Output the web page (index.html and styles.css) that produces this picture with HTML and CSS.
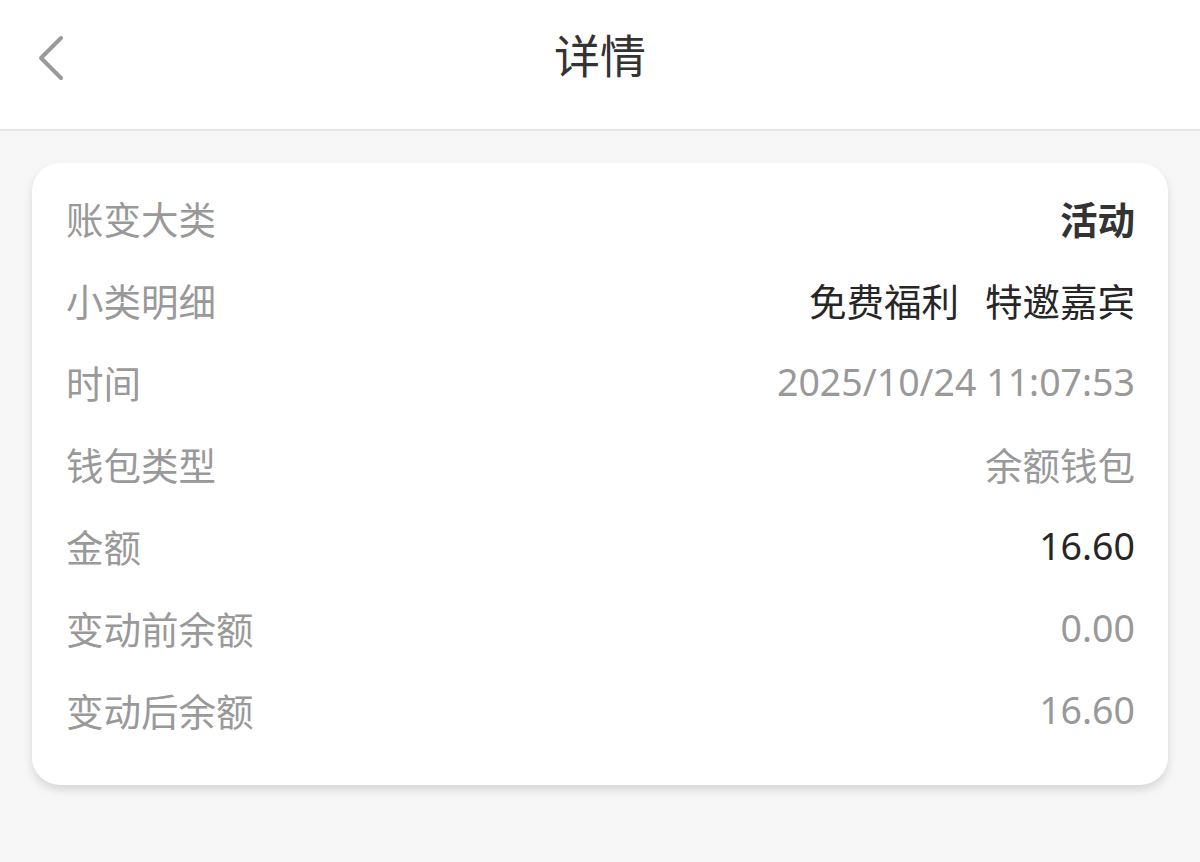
FILE: index.html
```html
<!DOCTYPE html>
<html lang="zh-CN">
<head>
    <meta charset="UTF-8">
    <meta name="viewport" content="width=device-width, initial-scale=1.0">
    <title>详情</title>
    <link rel="stylesheet" href="styles.css">
</head>
<body>

    <header class="top-bar">
        <a class="back-btn" href="#">
            <svg width="36" height="48" viewBox="0 0 36 48">
                <path d="M27 4 L7 24 L27 44" fill="none" stroke="#9a9a9a" stroke-width="4" stroke-linecap="round" stroke-linejoin="round"/>
            </svg>
        </a>
        <h1 class="title">详情</h1>
    </header>

    <main class="content">
        <div class="detail-card">
            <div class="row">
                <span class="label">账变大类</span>
                <span class="value strong">活动</span>
            </div>
            <div class="row">
                <span class="label">小类明细</span>
                <span class="value dark"><span>免费福利</span><span class="tag-gap">特邀嘉宾</span></span>
            </div>
            <div class="row">
                <span class="label">时间</span>
                <span class="value">2025/10/24 11:07:53</span>
            </div>
            <div class="row">
                <span class="label">钱包类型</span>
                <span class="value">余额钱包</span>
            </div>
            <div class="row">
                <span class="label">金额</span>
                <span class="value dark">16.60</span>
            </div>
            <div class="row">
                <span class="label">变动前余额</span>
                <span class="value">0.00</span>
            </div>
            <div class="row">
                <span class="label">变动后余额</span>
                <span class="value">16.60</span>
            </div>
        </div>
    </main>

</body>
</html>
```

FILE: styles.css
```css
body {
    margin: 0;
    padding: 0;
    font-family: "Noto Sans", "Noto Sans CJK SC", sans-serif;
    background-color: #f7f7f7;
    min-height: 862px;
}

.top-bar {
    height: 129px;
    background-color: #ffffff;
    border-bottom: 2px solid #e6e6e6;
    display: flex;
    align-items: center;
    justify-content: center;
    position: relative;
}

.back-btn {
    position: absolute;
    left: 34px;
    top: 34px;
    display: block;
    line-height: 0;
}

.title {
    margin: 0;
    font-size: 46px;
    font-weight: 400;
    color: #333333;
    line-height: 1;
    padding-bottom: 19px;
}

.content {
    padding: 32px 32px 0 32px;
}

.detail-card {
    background-color: #ffffff;
    border-radius: 28px;
    box-shadow: 0 5px 10px rgba(0, 0, 0, 0.13);
    padding: 13px 33px 35px 34px;
}

.row {
    display: flex;
    justify-content: space-between;
    align-items: center;
    height: 82px;
    font-size: 37.5px;
}

.label {
    color: #999999;
}

.value {
    color: #999999;
}

.value.dark {
    color: #262626;
}

.value.strong {
    color: #333333;
    font-weight: 700;
}

.tag-gap {
    margin-left: 26px;
}
```
